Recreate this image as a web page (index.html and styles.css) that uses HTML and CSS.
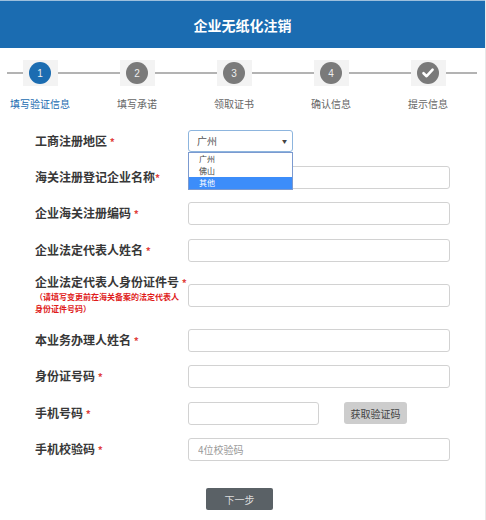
FILE: index.html
```html
<!DOCTYPE html>
<html>

<head>
    <title>企业无纸化注销</title>
    <link rel="stylesheet" href="styles.css">
</head>

<body>
    <div class="page">
        <div class="header">企业无纸化注销</div>

        <div class="steps">
            <div class="step active">
                <div class="step-icon"><span class="dot">1</span></div>
                <div class="step-name">填写验证信息</div>
            </div>
            <div class="step">
                <div class="step-icon"><span class="dot">2</span></div>
                <div class="step-name">填写承诺</div>
            </div>
            <div class="step">
                <div class="step-icon"><span class="dot">3</span></div>
                <div class="step-name">领取证书</div>
            </div>
            <div class="step">
                <div class="step-icon"><span class="dot">4</span></div>
                <div class="step-name">确认信息</div>
            </div>
            <div class="step">
                <div class="step-icon">
                    <span class="dot">
                        <svg width="14" height="14" viewBox="0 0 14 14">
                            <path d="M2.5 7.2 L5.6 10.2 L11.6 3.6" fill="none" stroke="#fff" stroke-width="2.6" stroke-linecap="round" stroke-linejoin="round" />
                        </svg>
                    </span>
                </div>
                <div class="step-name">提示信息</div>
            </div>
        </div>

        <form class="form">
            <div class="row">
                <label class="label">工商注册地区 <em>*</em></label>
                <div class="select-wrap">
                    <div class="select">广州<span class="arrow">&#9660;</span></div>
                    <ul class="options">
                        <li>广州</li>
                        <li>佛山</li>
                        <li class="on">其他</li>
                    </ul>
                </div>
            </div>
            <div class="row">
                <label class="label">海关注册登记企业名称<em>*</em></label>
                <input class="input" type="text">
            </div>
            <div class="row">
                <label class="label">企业海关注册编码 <em>*</em></label>
                <input class="input" type="text">
            </div>
            <div class="row">
                <label class="label">企业法定代表人姓名 <em>*</em></label>
                <input class="input" type="text">
            </div>
            <div class="row">
                <label class="label">企业法定代表人身份证件号 <em>*</em>
                    <span class="note">（请填写变更前在海关备案的法定代表人<br>身份证件号码）</span>
                </label>
                <input class="input" type="text">
            </div>
            <div class="row">
                <label class="label">本业务办理人姓名 <em>*</em></label>
                <input class="input" type="text">
            </div>
            <div class="row">
                <label class="label">身份证号码 <em>*</em></label>
                <input class="input" type="text">
            </div>
            <div class="row">
                <label class="label">手机号码 <em>*</em></label>
                <input class="input short" type="text">
                <button class="code-btn" type="button">获取验证码</button>
            </div>
            <div class="row">
                <label class="label">手机校验码 <em>*</em></label>
                <input class="input" type="text" placeholder="4位校验码">
            </div>
            <div class="actions">
                <button class="next-btn" type="button">下一步</button>
            </div>
        </form>
    </div>
</body>

</html>
```

FILE: styles.css
```css
body {
    margin: 0;
    background: #fff;
    font-family: "Noto Sans CJK SC", "Liberation Sans", sans-serif;
    color: #333;
}

.page {
    width: 485px;
    min-height: 520px;
    border-right: 1px solid #e8e8e8;
}

.header {
    height: 48px;
    line-height: 48px;
    background-color: #1b6cb1;
    border-top: 1px solid #9dbfdc;
    box-sizing: border-box;
    color: #fff;
    font-size: 14px;
    font-weight: bold;
    text-align: center;
}

/* step bar */
.steps {
    position: relative;
    display: grid;
    grid-template-columns: repeat(5, 80px);
    column-gap: 17px;
    padding-top: 12px;
    height: 70px;
    box-sizing: border-box;
}

.steps::before {
    content: "";
    position: absolute;
    left: 7px;
    right: 8px;
    top: 24px;
    height: 2px;
    background-color: #b3b3b3;
}

.step {
    display: flex;
    flex-direction: column;
    align-items: center;
}

.step-icon {
    position: relative;
    width: 35px;
    height: 26px;
    background-color: #f3f3f3;
    display: flex;
    align-items: center;
    justify-content: center;
}

.dot {
    width: 22px;
    height: 22px;
    border-radius: 50%;
    background-color: #7a7a7a;
    color: #eee;
    font-size: 10px;
    font-family: "Liberation Sans", sans-serif;
    display: flex;
    align-items: center;
    justify-content: center;
}

.step.active .dot {
    background-color: #1b6cb1;
}

.step-name {
    margin-top: 11px;
    font-size: 10px;
    line-height: 14px;
    color: #666;
    white-space: nowrap;
}

.step.active .step-name {
    color: #1b6cb1;
}

/* form */
.form {
    padding: 12px 0 0 35px;
    margin: 0;
}

.row {
    display: flex;
    align-items: center;
    margin-bottom: 13.5px;
}

.label {
    width: 153px;
    flex-shrink: 0;
    font-size: 12px;
    line-height: 14px;
    font-weight: bold;
    color: #383838;
}

.label em {
    font-style: normal;
    color: #e0403c;
    font-size: 10px;
}

.note {
    display: block;
    margin-top: 1px;
    font-size: 8px;
    line-height: 12px;
    color: #e01b1b;
    font-weight: bold;
    white-space: nowrap;
}

.input {
    width: 262px;
    height: 23px;
    box-sizing: border-box;
    border: 1px solid #d2d2d2;
    border-radius: 3px;
    padding: 0 9px;
    font-size: 10px;
    font-family: "Noto Sans CJK SC", sans-serif;
    margin: 0;
}

.input::placeholder {
    color: #9a9a9a;
}

.input.short {
    width: 131px;
}

.code-btn {
    margin-left: 25px;
    width: 63px;
    height: 22px;
    border: none;
    border-radius: 3px;
    background-color: #cdcdcd;
    color: #444;
    font-size: 10px;
    font-family: "Noto Sans CJK SC", sans-serif;
    padding: 0;
}

/* select with open list */
.select-wrap {
    position: relative;
    width: 105px;
}

.select {
    height: 22px;
    line-height: 20px;
    box-sizing: border-box;
    border: 1px solid #8db5de;
    border-radius: 3px;
    padding-left: 8px;
    font-size: 10px;
    color: #555;
}

.arrow {
    position: absolute;
    right: 6px;
    top: 1px;
    font-size: 5px;
    color: #444;
}

.options {
    position: absolute;
    top: 22px;
    left: 0;
    width: 105px;
    box-sizing: border-box;
    margin: 0;
    padding: 0;
    list-style: none;
    background: #fff;
    border: 1px solid #7b9ad0;
    z-index: 2;
}

.options li {
    height: 12px;
    line-height: 12px;
    padding-left: 10px;
    font-size: 8px;
    color: #444;
}

.options li.on {
    background-color: #3c8dfa;
    color: #fff;
}

.actions {
    padding: 10px 0 0 171px;
}

.next-btn {
    width: 67px;
    height: 22px;
    border: none;
    border-radius: 2px;
    background-color: #5a6166;
    color: #ddd;
    font-size: 10px;
    font-family: "Noto Sans CJK SC", sans-serif;
    padding: 0;
}
```
